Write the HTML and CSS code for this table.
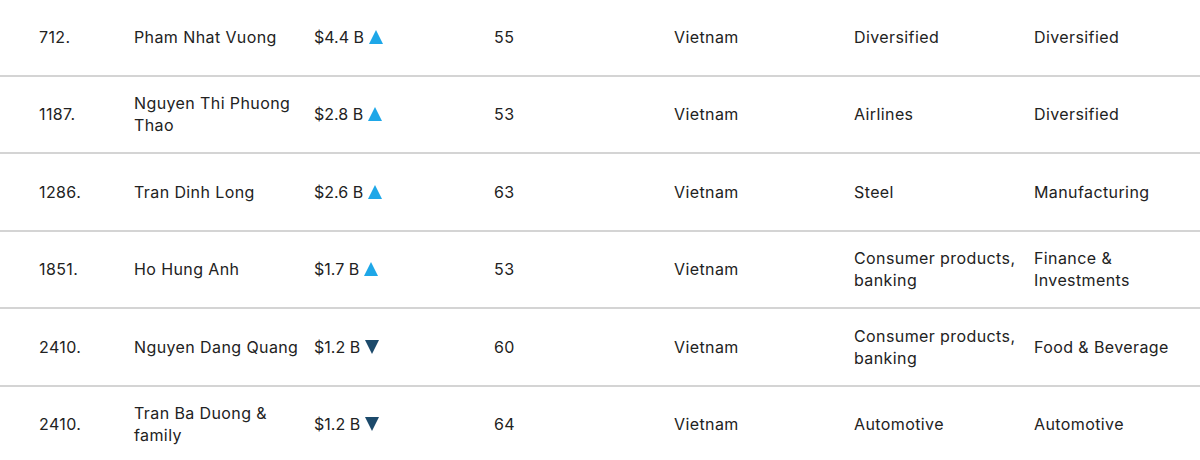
FILE: index.html
```html
<!DOCTYPE html>
<html>
<head>
<meta charset="utf-8">
<link rel="stylesheet" href="styles.css">
</head>
<body>
<div class="table">
  <div class="row">
    <div class="cell">712.</div>
    <div class="cell">Pham Nhat Vuong</div>
    <div class="cell worth">$4.4 B <span class="tri up"></span></div>
    <div class="cell">55</div>
    <div class="cell">Vietnam</div>
    <div class="cell">Diversified</div>
    <div class="cell">Diversified</div>
  </div>
  <div class="row">
    <div class="cell">1187.</div>
    <div class="cell">Nguyen Thi Phuong Thao</div>
    <div class="cell worth">$2.8 B <span class="tri up"></span></div>
    <div class="cell">53</div>
    <div class="cell">Vietnam</div>
    <div class="cell">Airlines</div>
    <div class="cell">Diversified</div>
  </div>
  <div class="row">
    <div class="cell">1286.</div>
    <div class="cell">Tran Dinh Long</div>
    <div class="cell worth">$2.6 B <span class="tri up"></span></div>
    <div class="cell">63</div>
    <div class="cell">Vietnam</div>
    <div class="cell">Steel</div>
    <div class="cell">Manufacturing</div>
  </div>
  <div class="row">
    <div class="cell">1851.</div>
    <div class="cell">Ho Hung Anh</div>
    <div class="cell worth">$1.7 B <span class="tri up"></span></div>
    <div class="cell">53</div>
    <div class="cell">Vietnam</div>
    <div class="cell">Consumer products, banking</div>
    <div class="cell">Finance &amp; Investments</div>
  </div>
  <div class="row">
    <div class="cell">2410.</div>
    <div class="cell">Nguyen Dang Quang</div>
    <div class="cell worth">$1.2 B <span class="tri down"></span></div>
    <div class="cell">60</div>
    <div class="cell">Vietnam</div>
    <div class="cell">Consumer products, banking</div>
    <div class="cell">Food &amp; Beverage</div>
  </div>
  <div class="row">
    <div class="cell">2410.</div>
    <div class="cell">Tran Ba Duong &amp; family</div>
    <div class="cell worth">$1.2 B <span class="tri down"></span></div>
    <div class="cell">64</div>
    <div class="cell">Vietnam</div>
    <div class="cell">Automotive</div>
    <div class="cell">Automotive</div>
  </div>
</div>
</body>
</html>
```
FILE: styles.css
```css
html, body {
  margin: 0;
  padding: 0;
  background: #fff;
}
body {
  font-family: "Inter", "Liberation Sans", sans-serif;
  font-size: 16px;
  line-height: 22px;
  color: #222;
  letter-spacing: 0.4px;
}
.table {
  display: flex;
  flex-direction: column;
  margin-top: -1px;
}
.row {
  display: grid;
  grid-template-columns: 95px 180px 180px 180px 180px 180px 1fr;
  padding-left: 39px;
  height: 75.5px;
  align-items: center;
  border-bottom: 2px solid #d4d4d4;
}
.cell {
  padding-right: 8px;
}
.worth {
  display: flex;
  align-items: center;
  gap: 5px;
  letter-spacing: 0;
}
.tri {
  display: inline-block;
  width: 0;
  height: 0;
  border-left: 7px solid transparent;
  border-right: 7px solid transparent;
}
.tri.up {
  border-bottom: 14px solid #1ea7e8;
}
.tri.down {
  border-top: 14px solid #1c4a6b;
}
```
